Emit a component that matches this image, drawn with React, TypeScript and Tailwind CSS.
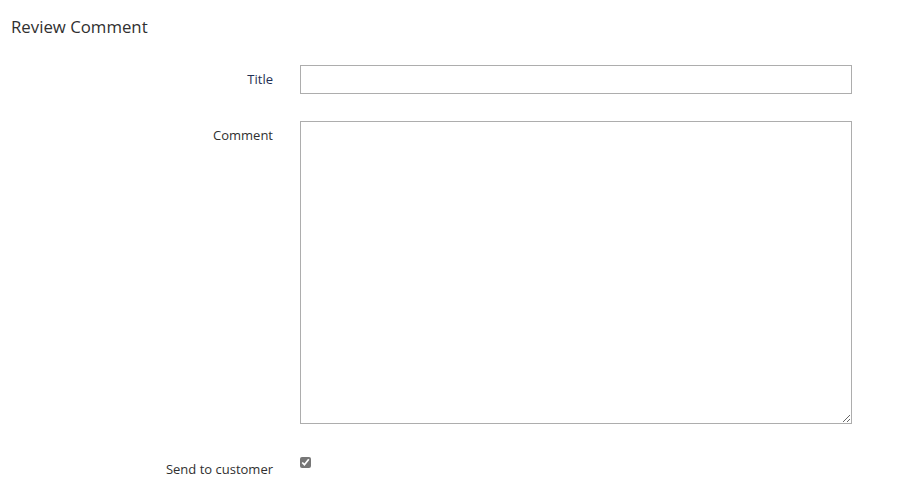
export default function App() {
  return (
    <div className="min-h-[501px] bg-white font-['Open_Sans',sans-serif] text-[13px] text-[#303030]">
      <h2 className="px-[11px] pt-[15px] text-[16.8px] font-normal leading-[24px] text-[#303030]">
        Review Comment
      </h2>

      <div className="mt-[26px] flex flex-col">
        <div className="flex items-center">
          <label className="w-[273px] text-right text-[#1f2f54]">Title</label>
          <input
            type="text"
            className="ml-[27px] h-[29px] w-[552px] border border-[#adadad] bg-white px-2 outline-none"
          />
        </div>

        <div className="mt-[27px] flex items-start">
          <label className="mt-[5px] w-[273px] text-right">Comment</label>
          <textarea className="ml-[27px] h-[303px] w-[552px] border border-[#adadad] bg-white px-2 py-1 outline-none" />
        </div>

        <div className="mt-[32px] flex items-start">
          <label className="mt-[4px] w-[273px] text-right">Send to customer</label>
          <input
            type="checkbox"
            defaultChecked
            className="ml-[27px] mt-[1px] h-[11px] w-[11px] accent-[#777]"
          />
        </div>
      </div>
    </div>
  );
}
